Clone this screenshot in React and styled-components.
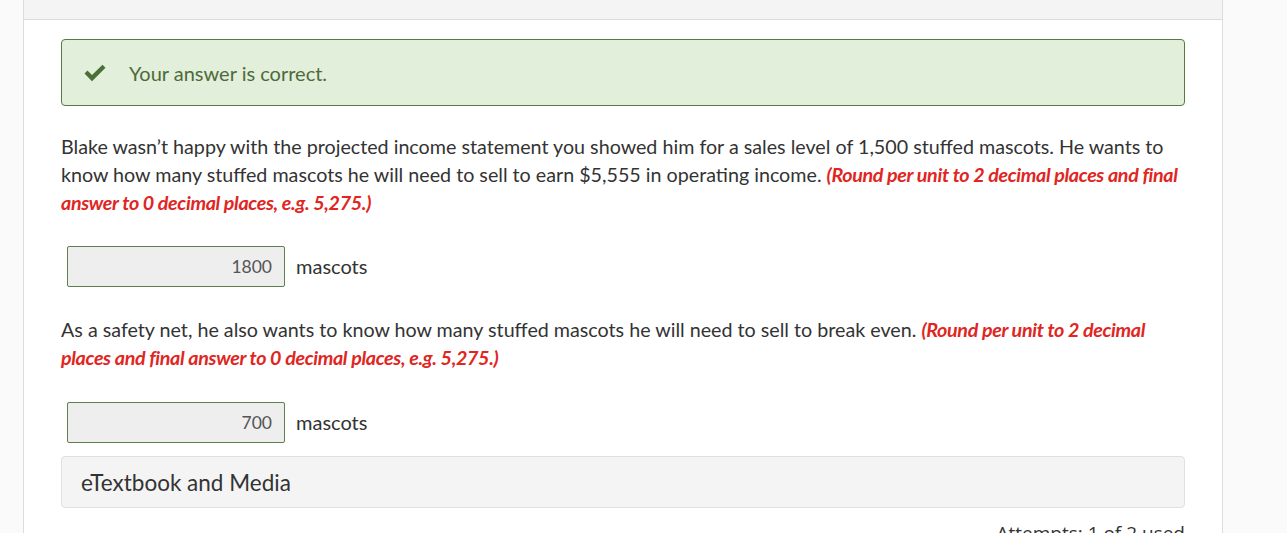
import React from "react";
import styled, { createGlobalStyle } from "styled-components";

const Global = createGlobalStyle`
  html, body { margin: 0; padding: 0; background: #fafafa; }
  body { font-family: Lato, "Open Sans", Arial, sans-serif; color: #333; overflow: hidden; }
`;

const Page = styled.div`
  display: flex;
  align-items: flex-start;
  padding-left: 23px;
  width: 1287px;
  height: 533px;
  box-sizing: border-box;
  overflow: hidden;
`;

const Card = styled.div`
  width: 1200px;
  min-height: 533px;
  flex-shrink: 0;
  box-sizing: border-box;
  background: #fff;
  border-left: 1px solid #ddd;
  border-right: 1px solid #ddd;
  display: flex;
  flex-direction: column;
`;

const HeaderBand = styled.div`
  height: 19px;
  flex-shrink: 0;
  background: #f4f4f4;
  border-bottom: 1px solid #dcdcdc;
`;

const Body = styled.div`
  padding: 19px 37px 0 37px;
  display: flex;
  flex-direction: column;
`;

const Success = styled.div`
  height: 67px;
  flex-shrink: 0;
  box-sizing: border-box;
  border: 1px solid #557a43;
  border-radius: 4px;
  background: #e2efdb;
  display: flex;
  align-items: center;
  padding-left: 21px;
  gap: 22px;
`;

const SuccessText = styled.span`
  font-size: 20px;
  color: #4d6b3a;
  margin-top: 1px;
`;

const Para = styled.p`
  margin: ${(p) => p.$mt}px 0 0 0;
  font-size: 19.7px;
  line-height: 28px;
  color: #333;
`;

const Hint = styled.span`
  color: #e0261f;
  font-weight: 700;
  font-style: italic;
  letter-spacing: -0.35px;
`;

const AnswerRow = styled.div`
  display: flex;
  align-items: center;
  gap: 11px;
  margin-top: ${(p) => p.$mt}px;
  padding-left: 6px;
`;

const AnswerBox = styled.div`
  width: 218px;
  height: 41px;
  flex-shrink: 0;
  box-sizing: border-box;
  border: 1px solid #5d7f4c;
  border-radius: 2px;
  background: #eeeeee;
  display: flex;
  align-items: center;
  justify-content: flex-end;
  padding-right: 12px;
  font-size: 17.5px;
  color: #555;
`;

const Unit = styled.span`
  font-size: 20px;
  color: #333;
  margin-top: -2px;
`;

const MediaBar = styled.div`
  margin-top: 13px;
  height: 52px;
  flex-shrink: 0;
  box-sizing: border-box;
  border: 1px solid #e0e0e0;
  border-radius: 4px;
  background: #f4f4f4;
  display: flex;
  align-items: center;
  padding-left: 19px;
  font-size: 22.5px;
  color: #333;
`;

const Attempts = styled.div`
  margin-top: 13px;
  text-align: right;
  font-size: 19px;
  line-height: 24px;
  color: #333;
  font-family: "Open Sans", Arial, sans-serif;
`;

const Check = () => (
  <svg width="24" height="18" viewBox="0 0 24 18" aria-hidden="true">
    <path d="M1.5 9.5 L4.5 6.5 L9 11 L19.5 0.8 L22.5 3.8 L9 17.2 Z" fill="#4a7035" />
  </svg>
);

export default function App() {
  return (
    <Page>
      <Global />
      <Card>
        <HeaderBand />
        <Body>
          <Success>
            <Check />
            <SuccessText>Your answer is correct.</SuccessText>
          </Success>
          <Para $mt={27}>
            Blake wasn’t happy with the projected income statement you showed him for a sales level of 1,500 stuffed mascots. He wants to
            know how many stuffed mascots he will need to sell to earn $5,555 in operating income.{" "}
            <Hint>(Round per unit to 2 decimal places and final answer to 0 decimal places, e.g. 5,275.)</Hint>
          </Para>
          <AnswerRow $mt={29}>
            <AnswerBox>1800</AnswerBox>
            <Unit>mascots</Unit>
          </AnswerRow>
          <Para $mt={29}>
            As a safety net, he also wants to know how many stuffed mascots he will need to sell to break even.{" "}
            <Hint>(Round per unit to 2 decimal places and final answer to 0 decimal places, e.g. 5,275.)</Hint>
          </Para>
          <AnswerRow $mt={30}>
            <AnswerBox>700</AnswerBox>
            <Unit>mascots</Unit>
          </AnswerRow>
          <MediaBar>eTextbook and Media</MediaBar>
          <Attempts>Attempts: 1 of 2 used</Attempts>
        </Body>
      </Card>
    </Page>
  );
}
